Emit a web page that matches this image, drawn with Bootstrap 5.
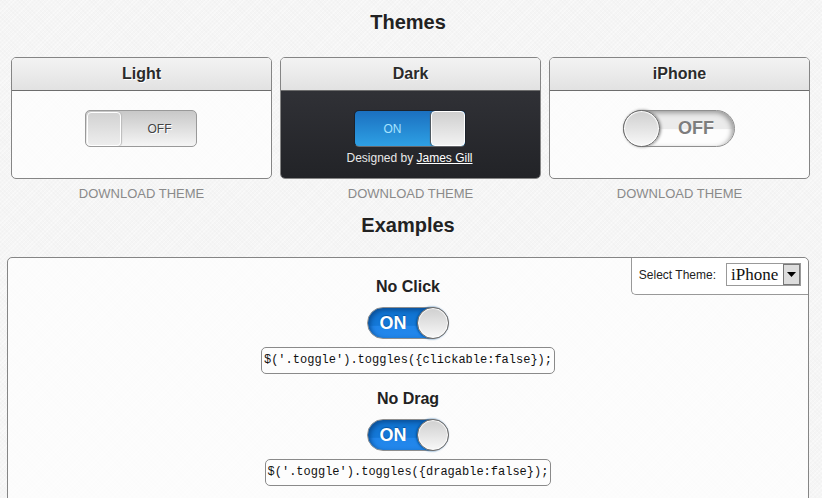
<!DOCTYPE html>
<html lang="en">
<head>
<meta charset="utf-8">
<meta name="viewport" content="width=device-width, initial-scale=1">
<title>Toggles</title>
<link href="https://cdn.jsdelivr.net/npm/bootstrap@5.3.0/dist/css/bootstrap.min.css" rel="stylesheet">
<style>
body {
  font-family: "Liberation Sans", Arial, sans-serif;
  color: #222;
  background-color: #f5f5f5;
  background-image:
    repeating-linear-gradient(45deg, #0000 0 2px, #00000003 2px 3px),
    repeating-linear-gradient(-45deg, #0000 0 2px, #ffffff60 2px 3px);
}
.page { padding: 8px 13px 0 7px; }
.section-title { font-size: 20px; line-height: 28px; font-weight: bold; margin: 0; }
.themes { display: grid; grid-template-columns: repeat(3, 1fr); gap: 8px; padding: 21px 0 2px 4px; margin-right: -1px; }
.theme-card { border: 1px solid #858585; border-radius: 5px; background: #ffffffa8; overflow: hidden; }
.theme-card .card-header {
  padding: 0; font-size: 16px; line-height: 32px; font-weight: bold; color: #2b2b2b;
  background: linear-gradient(#f3f3f3, #e2e2e2); border-bottom: 1px solid #6d6d6d;
  text-shadow: 1px 1px 0 #fff; border-radius: 0;
}
.theme-card .card-body { padding: 19px 2px 11px 0; min-height: 87px; }
.theme-dark .card-body { background: linear-gradient(#303136, #222327); color: #e8e8e8; }
.credit { font-size: 12px; line-height: 18px; margin: 2px 0 0; }
.credit a { color: #fff; }
.download { font-size: 13px; line-height: 30px; color: #8a8a8a; text-decoration: none; }

.toggle { display: inline-flex; align-items: center; padding: 0; width: 112px; height: 37px; text-align: center; }
.toggle-text { flex: 1; }
.toggle-light, .toggle-dark { font-size: 12px; border-radius: 5px; }
.toggle-light { padding: 1px; border: 1px solid #999; background: linear-gradient(#c8c8c8, #f5f5f5); color: #444; text-shadow: 1px 1px 0 #fff; }
.toggle-light .toggle-text { padding-left: 4px; }
.toggle-light .knob { width: 34px; height: 34px; border: 1px solid #fff; border-radius: 4px; background: linear-gradient(#d2d2d2, #ededed); box-shadow: 1px 0 1px #bbb; }
.toggle-dark { border: 1px solid #1c222b; border-bottom-color: #68696d; background: linear-gradient(#1b70c0, #2ea0e4); color: #a5e3ff; }
.toggle-dark .knob { width: 34px; height: 35px; border: 1px solid #fff; border-radius: 4px; background: linear-gradient(#cfcfcf, #f2f2f2); box-shadow: -1px 0 1px #555; }
.toggle-phone { font-size: 18px; font-weight: bold; border: 1px solid #8f8f8f; border-radius: 19px; }
.toggle-phone .knob { width: 37px; height: 37px; margin: -1px; border: 1px solid #6c6c6c; border-radius: 50%; background: linear-gradient(#cfcfcf, #f8f8f8); box-shadow: inset 0 0 1px 1px #fff, 1px 0 3px #888; }
.phone-off { color: #7d7d7d; background: linear-gradient(#ebebeb 52%, #fdfdfd 53%); box-shadow: inset -2px 2px 5px #999, inset 0 -2px 2px #fff; }
.phone-off .toggle-text { text-shadow: 0 1px 0 #fff; }
.phone-on { width: 82px; height: 32px; color: #fff; background: linear-gradient(#1073d0, #1478d8 58%, #2085ea 60%, #2488ec); box-shadow: inset 2px 2px 5px #0a4c92; }
.phone-on .toggle-text { text-shadow: 0 -1px 1px #06549f; }
.phone-on .knob { width: 32px; height: 32px; box-shadow: inset 0 0 1px 1px #fff, -1px 0 2px #04549d; }

.examples { margin-top: 18px; padding: 19px 0 40px; border: 1px solid #858585; border-radius: 5px; background: #ffffffa8; }
.selector { position: absolute; top: 0; right: 0; padding: 5px 7px 8px; background: #fff; border: 1px solid #999; border-width: 0 0 1px 1px; border-radius: 0 5px 0 5px; font-size: 12px; }
.theme-select {
  appearance: none; width: 75px; height: 23px; padding: 0 0 0 4px; margin-left: 10px;
  font: 17px/20px "Liberation Serif", serif; color: #111; border: 1px solid #999; border-radius: 0;
  background:
    url("data:image/svg+xml,%3Csvg xmlns='http://www.w3.org/2000/svg' width='17' height='21'%3E%3Crect x='.5' y='.5' width='16' height='20' fill='%23ddd' stroke='%23777'/%3E%3Cpath d='M4 8h9l-4.500 5z'/%3E%3C/svg%3E") right 0 center no-repeat #fff;
}
.example { margin-bottom: 15px; }
.example h3 { font-size: 16px; line-height: 20px; font-weight: bold; margin: 0 0 10px; }
.example code { font: 12px/25px "Liberation Mono", monospace; color: #111; background: #fdfdfd; border: 1px solid #8a8a8a; border-radius: 5px; padding: 0 2px; margin-top: 8px; }
</style>
</head>
<body>
<main class="page">
  <h2 class="section-title text-center">Themes</h2>
  <section class="themes text-center">
    <div>
      <div class="card theme-card">
        <div class="card-header">Light</div>
        <div class="card-body">
          <button type="button" class="toggle toggle-light" role="switch" aria-checked="false"><span class="knob"></span><span class="toggle-text">OFF</span></button>
        </div>
      </div>
      <a href="#" class="download d-block">DOWNLOAD THEME</a>
    </div>
    <div>
      <div class="card theme-card theme-dark">
        <div class="card-header">Dark</div>
        <div class="card-body d-flex flex-column align-items-center">
          <button type="button" class="toggle toggle-dark" role="switch" aria-checked="true"><span class="toggle-text">ON</span><span class="knob"></span></button>
          <p class="credit">Designed by <a href="#">James Gill</a></p>
        </div>
      </div>
      <a href="#" class="download d-block">DOWNLOAD THEME</a>
    </div>
    <div>
      <div class="card theme-card">
        <div class="card-header">iPhone</div>
        <div class="card-body">
          <button type="button" class="toggle toggle-phone phone-off" role="switch" aria-checked="false"><span class="knob"></span><span class="toggle-text">OFF</span></button>
        </div>
      </div>
      <a href="#" class="download d-block">DOWNLOAD THEME</a>
    </div>
  </section>

  <h2 class="section-title text-center">Examples</h2>
  <section class="examples position-relative">
    <div class="selector d-flex align-items-center">
      <label for="theme">Select Theme:</label>
      <select id="theme" class="theme-select"><option>Light</option><option>Dark</option><option selected>iPhone</option></select>
    </div>
    <div class="example d-flex flex-column align-items-center">
      <h3>No Click</h3>
      <button type="button" class="toggle toggle-phone phone-on" role="switch" aria-checked="true"><span class="toggle-text">ON</span><span class="knob"></span></button>
      <code>$('.toggle').toggles({clickable:false});</code>
    </div>
    <div class="example d-flex flex-column align-items-center">
      <h3>No Drag</h3>
      <button type="button" class="toggle toggle-phone phone-on" role="switch" aria-checked="true"><span class="toggle-text">ON</span><span class="knob"></span></button>
      <code>$('.toggle').toggles({dragable:false});</code>
    </div>
  </section>
</main>
<script src="https://cdn.jsdelivr.net/npm/bootstrap@5.3.0/dist/js/bootstrap.bundle.min.js"></script>
</body>
</html>
